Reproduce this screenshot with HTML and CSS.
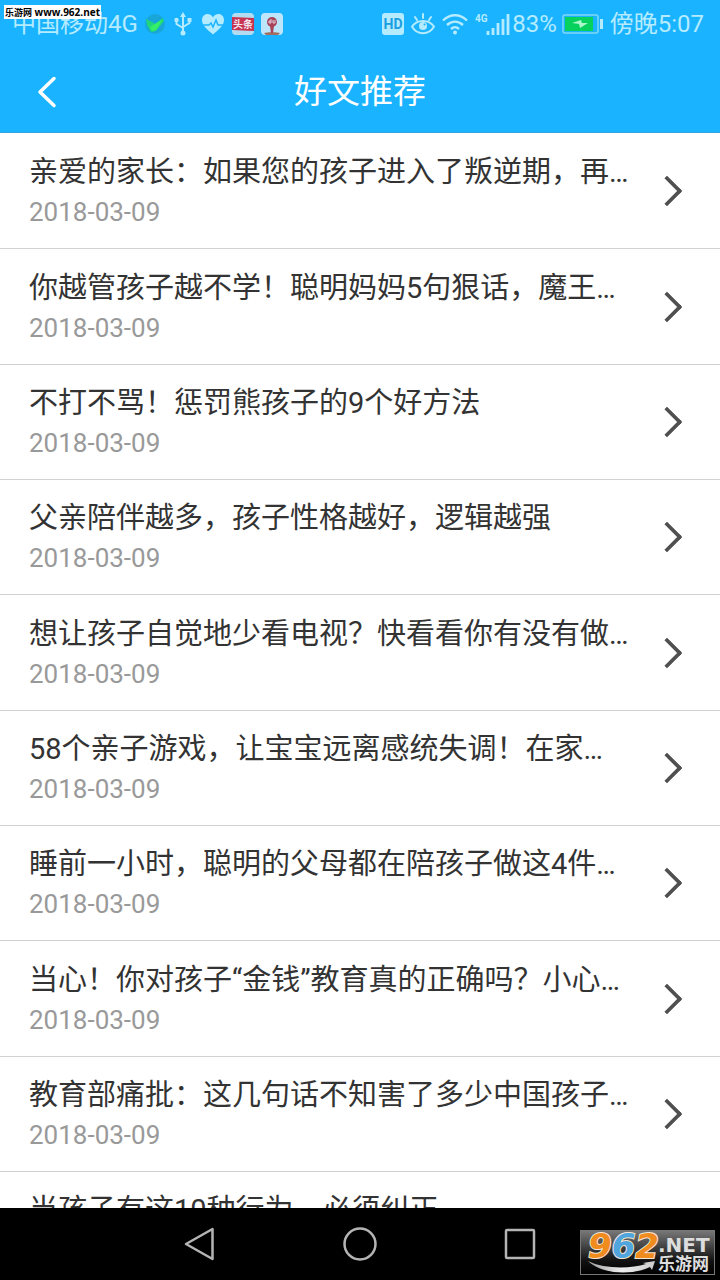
FILE: index.html
```
<!DOCTYPE html>
<html lang="zh-CN">
<head>
    <meta charset="UTF-8">
    <meta name="viewport" content="width=device-width, initial-scale=1.0">
    <title>好文推荐</title>
    <link rel="stylesheet" href="styles.css">
</head>
<body>
    <div class="site-tag"><span>乐游网</span> www.962.net</div>

    <!-- 状态栏 -->
    <div class="status-bar">
        <div class="status-group">
            <span>中国移动4G</span>
            <svg width="20" height="22" viewBox="0 0 20 22">
                <circle cx="10" cy="11" r="10" fill="#18a6d8"/>
                <path d="M1 6l6 3 3 2 8-6 1 3-8 10-5 1-4-7z" fill="#1fd67c"/>
                <path d="M5 14l5-3 8-5-7 11-4 1z" fill="#35ef68"/>
            </svg>
            <svg class="usb" width="28" height="24" viewBox="0 0 28 24" fill="none" stroke="#b4ebff" stroke-width="2">
                <path d="M14 4v17M7.500 8v4l6.500 4M20.500 8v3l-6.500 4"/>
                <path d="M14 0l3 5h-6z" fill="#b4ebff" stroke="none"/>
                <circle cx="14" cy="21" r="2.500" fill="#b4ebff" stroke="none"/>
                <circle cx="7.500" cy="8" r="2.200" fill="#b4ebff" stroke="none"/>
                <path d="M18.500 6h4v4h-4z" fill="#b4ebff" stroke="none"/>
            </svg>
            <svg width="24" height="22" viewBox="0 0 24 22">
                <path d="M12 21.500C7 17 1 13 1 7c0-3.500 2.500-6 5.500-6C9 1 11 2.500 12 4.500 13 2.500 15 1 17.500 1 20.500 1 23 3.500 23 7c0 6-6 10-11 14.500z" fill="#b4ebff"/>
                <path d="M2 12h6l2-2 2 4 3-7 2 5h5" fill="none" stroke="#1ab3ff" stroke-width="1.500"/>
            </svg>
            <svg width="22" height="22" viewBox="0 0 22 22">
                <rect width="22" height="22" rx="4" fill="#b4dcf0"/>
                <path d="M0 4l22 1v13l-22-1z" fill="#c73350"/>
                <text x="11" y="15" text-anchor="middle" class="news-text">头条</text>
            </svg>
            <svg width="22" height="22" viewBox="0 0 22 22">
                <rect width="22" height="22" rx="4" fill="#bde6fa"/>
                <path d="M3 20c2-1 14-1 16 0l-2 2H5z" fill="#a0705e"/>
                <path d="M9 13h4l-1 7h-2z" fill="#a8435a"/>
                <circle cx="11" cy="9" r="5" fill="#a8435a"/>
                <path d="M10 6v4H8V8h2M12 7v3h2V7" fill="none" stroke="#e6d4e2"/>
            </svg>
        </div>
        <div class="status-group">
            <svg width="22" height="22" viewBox="0 0 22 22">
                <rect width="22" height="22" rx="3" fill="#b4ebff"/>
                <text x="11" y="16" text-anchor="middle" class="hd-text">HD</text>
            </svg>
            <svg width="24" height="22" viewBox="0 0 24 22" fill="none" stroke="#b4ebff" stroke-width="2" stroke-linecap="round">
                <path d="M1 13.500C6 6 18 6 23 13.500 18 22.500 6 22.500 1 13.500zM12 1v4M4 4l2 3M20 4l-2 3"/>
                <circle cx="12" cy="13" r="4" fill="#b4ebff" stroke="none"/>
                <circle cx="13.500" cy="11.500" r="1" fill="#1ab3ff" stroke="none"/>
            </svg>
            <svg width="26" height="22" viewBox="0 0 26 22" fill="none" stroke="#b4ebff" stroke-width="2.400">
                <path d="M1 7.500C8 .5 18 .5 25 7.500M5 12c5-4.500 11-4.500 16 0M9 16c3-2.500 5-2.500 8 0"/>
                <circle cx="13" cy="19.500" r="2" fill="#b4ebff" stroke="none"/>
            </svg>
            <svg width="36" height="24" viewBox="0 0 36 24">
                <text x="0" y="10" class="net-text">4G</text>
                <path d="M13 23v-4M18 23v-7M23 23V11M28 23V7M33 23V2" stroke="#b4ebff" stroke-width="2.800"/>
            </svg>
            <span class="percent">83%</span>
            <svg width="41" height="20" viewBox="0 0 41 20">
                <rect x="1" y="1" width="35" height="18" rx="2" fill="none" stroke="#7fd9f5" stroke-width="1.500"/>
                <rect x="3" y="3" width="28" height="14" fill="#06d15c"/>
                <path d="M10 9l9-3 1 3h6l-8 5-1-4z" fill="#a9f7cb"/>
                <rect x="38" y="5" width="3" height="10" fill="#b4ebff"/>
            </svg>
            <span>傍晚5:07</span>
        </div>
    </div>

    <!-- 标题栏 -->
    <header class="header">
        <button type="button" class="back" aria-label="返回">
            <svg width="20" height="32" viewBox="0 0 20 32" fill="none" stroke="#fff" stroke-width="3.500" stroke-linecap="round" stroke-linejoin="round">
                <path d="M17 2.500L3 16l14 13.500"/>
            </svg>
        </button>
        <h1>好文推荐</h1>
    </header>

    <!-- 文章列表 -->
    <ul class="list">
        <li><a href="#"><div class="info"><h2>亲爱的家长：如果您的孩子进入了叛逆期，再…</h2><p>2018-03-09</p></div><span class="arrow"></span></a></li>
        <li><a href="#"><div class="info"><h2>你越管孩子越不学！聪明妈妈5句狠话，魔王…</h2><p>2018-03-09</p></div><span class="arrow"></span></a></li>
        <li><a href="#"><div class="info"><h2>不打不骂！惩罚熊孩子的9个好方法</h2><p>2018-03-09</p></div><span class="arrow"></span></a></li>
        <li><a href="#"><div class="info"><h2>父亲陪伴越多，孩子性格越好，逻辑越强</h2><p>2018-03-09</p></div><span class="arrow"></span></a></li>
        <li><a href="#"><div class="info"><h2>想让孩子自觉地少看电视？快看看你有没有做…</h2><p>2018-03-09</p></div><span class="arrow"></span></a></li>
        <li><a href="#"><div class="info"><h2>58个亲子游戏，让宝宝远离感统失调！在家…</h2><p>2018-03-09</p></div><span class="arrow"></span></a></li>
        <li><a href="#"><div class="info"><h2>睡前一小时，聪明的父母都在陪孩子做这4件…</h2><p>2018-03-09</p></div><span class="arrow"></span></a></li>
        <li><a href="#"><div class="info"><h2>当心！你对孩子“金钱”教育真的正确吗？小心…</h2><p>2018-03-09</p></div><span class="arrow"></span></a></li>
        <li><a href="#"><div class="info"><h2>教育部痛批：这几句话不知害了多少中国孩子…</h2><p>2018-03-09</p></div><span class="arrow"></span></a></li>
        <li><a href="#"><div class="info"><h2>当孩子有这10种行为，必须纠正</h2><p>2018-03-09</p></div><span class="arrow"></span></a></li>
    </ul>

    <!-- 系统导航键 -->
    <nav class="nav-bar">
        <button type="button" aria-label="返回">
            <svg width="36" height="36" viewBox="0 0 36 36"><path d="M30.500 3v30L4 18z"/></svg>
        </button>
        <button type="button" aria-label="主页">
            <svg width="36" height="36" viewBox="0 0 36 36"><circle cx="18" cy="18" r="15.500"/></svg>
        </button>
        <button type="button" aria-label="最近任务">
            <svg width="36" height="36" viewBox="0 0 36 36"><rect x="4" y="4" width="28" height="28" rx="1"/></svg>
        </button>
        <div class="logo">
            <svg width="133" height="43" viewBox="0 0 133 43">
                <defs>
                    <linearGradient id="swoosh" x1="0" x2="1">
                        <stop offset="0" stop-color="#999"/>
                        <stop offset="0.5" stop-color="#eee"/>
                        <stop offset="1" stop-color="#ccc"/>
                    </linearGradient>
                </defs>
                <text x="7" y="27" class="logo-num"><tspan fill="#f08c1e">9</tspan><tspan fill="#4fa5dc">6</tspan><tspan fill="#f08c1e">2</tspan></text>
                <text x="77" y="21" class="logo-net">.NET</text>
                <text x="77" y="39" class="logo-cn">乐游网</text>
                <path d="M7 30c16 8 42 8 58 3l-3-1 12-2-3 9-2-3C50 45 20 43 7 30z" fill="url(#swoosh)"/>
            </svg>
        </div>
    </nav>
</body>
</html>
```
FILE: styles.css
```
* {
    box-sizing: border-box;
}
body {
    display: flex;
    flex-direction: column;
    height: 100vh;
    margin: 0;
    overflow: hidden;
    font-family: Roboto, "Noto Sans CJK SC", sans-serif;
    background-color: #fff;
    color: #333;
}
h1, h2, p, ul {
    margin: 0;
    padding: 0;
    font-weight: normal;
}
button {
    padding: 0;
    border: none;
    background: none;
    cursor: pointer;
}
svg {
    display: block;
    flex: none;
}
.site-tag {
    position: absolute;
    top: 5px;
    left: 4px;
    height: 14px;
    padding: 0 1px;
    background-color: #fff;
    color: #000;
    font: bold 10px/15px "Open Sans", "Noto Sans CJK SC", sans-serif;
    white-space: nowrap;
}
.site-tag span {
    font-size: 9px;
}

/* 状态栏 */
.status-bar {
    display: flex;
    flex: none;
    align-items: center;
    justify-content: space-between;
    height: 48px;
    padding: 0 16px 0 12px;
    background-color: #1ab3ff;
    color: #b4ebff;
    font-size: 24px;
    line-height: 48px;
    white-space: nowrap;
}
.status-group {
    display: flex;
    align-items: center;
    gap: 7px;
}
.status-group .percent {
    margin: 0 -2px 0 -6px;
}
.usb {
    margin: 0 -3px;
}
.hd-text {
    font: bold 14px Roboto, sans-serif;
    fill: #1a9fe0;
}
.net-text {
    font: bold 10px Roboto, sans-serif;
    fill: #b4ebff;
}
.news-text {
    font: bold 10px "Noto Sans CJK SC", sans-serif;
    fill: #f2e6f0;
}

/* 标题栏 */
.header {
    display: grid;
    flex: none;
    grid-template-columns: 94px 1fr 94px;
    align-items: center;
    height: 85px;
    padding-top: 4px;
    border-bottom: 1px solid #35a5e0;
    background-color: #1ab3ff;
    color: #fff;
}
.back {
    display: flex;
    align-items: center;
    justify-content: center;
    height: 80px;
}
.header h1 {
    font-size: 33px;
    line-height: 48px;
    text-align: center;
}

/* 文章列表 */
.list {
    flex: 1;
    min-height: 0;
    padding-top: 1px;
    overflow: hidden;
    list-style: none;
}
.list li {
    height: 115px;
    border-bottom: 1px solid #d2d2d2;
}
.list li:nth-child(3n+2) {
    height: 116px;
}
.list a {
    display: flex;
    align-items: center;
    justify-content: space-between;
    height: 100%;
    padding: 0 42px 0 29px;
    color: inherit;
    text-decoration: none;
}
.info {
    padding-top: 2px;
}
.info h2 {
    font-size: 29px;
    line-height: 40px;
    white-space: nowrap;
}
.info p {
    color: #999;
    font-size: 26px;
    line-height: 40px;
}
.arrow {
    flex: none;
    width: 22px;
    height: 22px;
    border: solid #505050;
    border-width: 4px 4px 0 0;
    border-top-right-radius: 2px;
    transform: rotate(45deg);
}

/* 系统导航键 */
.nav-bar {
    position: relative;
    display: flex;
    flex: none;
    align-items: center;
    justify-content: center;
    gap: 124px;
    height: 72px;
    background-color: #000;
}
.nav-bar button svg {
    fill: none;
    stroke: #b4b4b4;
    stroke-width: 2.5;
    stroke-linejoin: round;
}
.logo {
    position: absolute;
    right: 5px;
    bottom: 5px;
    border: 1px solid #777;
    background-image: linear-gradient(#777, #111 70%, #000);
}
.logo-num {
    font: italic bold 34px "DejaVu Sans", sans-serif;
    stroke: #f4e6d6;
    stroke-width: 2;
    paint-order: stroke;
}
.logo-net {
    font: bold 20px "DejaVu Sans", sans-serif;
    fill: #ddd;
}
.logo-cn {
    font: bold 17px "Noto Sans CJK SC", sans-serif;
    fill: #ddd;
}
```
